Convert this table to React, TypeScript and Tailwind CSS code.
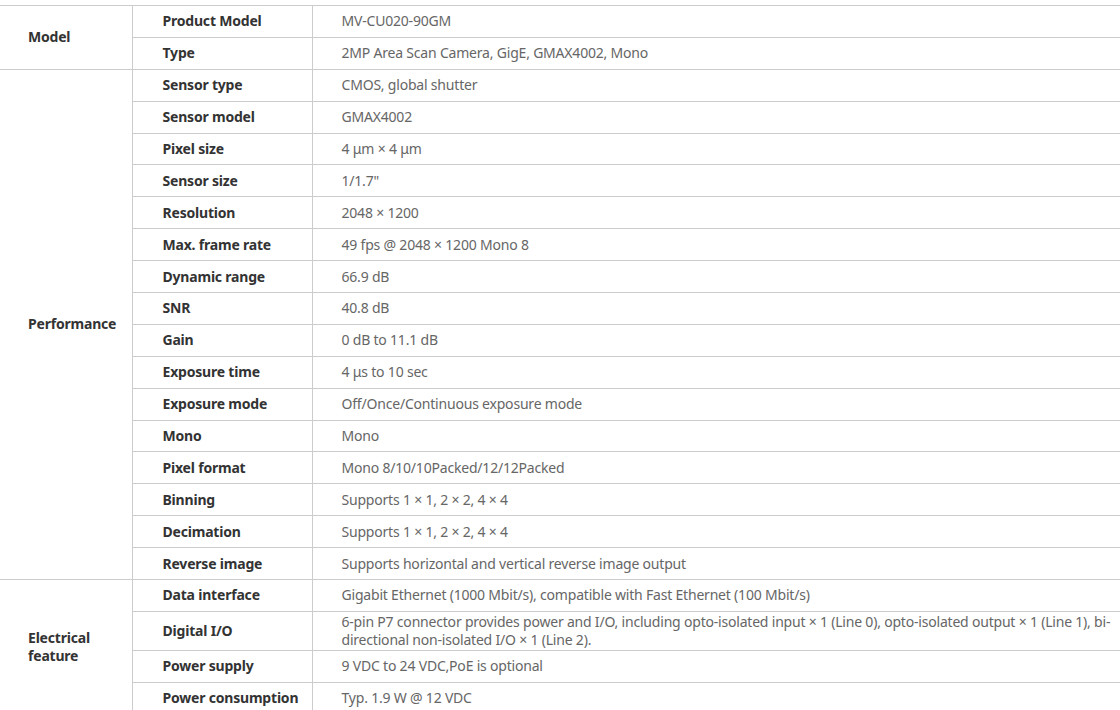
import React from "react";

type Row = [string, string];
type Group = { name: string; rows: Row[] };

const groups: Group[] = [
  {
    name: "Model",
    rows: [
      ["Product Model", "MV-CU020-90GM"],
      ["Type", "2MP Area Scan Camera, GigE, GMAX4002, Mono"],
    ],
  },
  {
    name: "Performance",
    rows: [
      ["Sensor type", "CMOS, global shutter"],
      ["Sensor model", "GMAX4002"],
      ["Pixel size", "4 μm × 4 μm"],
      ["Sensor size", "1/1.7\""],
      ["Resolution", "2048 × 1200"],
      ["Max. frame rate", "49 fps @ 2048 × 1200 Mono 8"],
      ["Dynamic range", "66.9 dB"],
      ["SNR", "40.8 dB"],
      ["Gain", "0 dB to 11.1 dB"],
      ["Exposure time", "4 μs to 10 sec"],
      ["Exposure mode", "Off/Once/Continuous exposure mode"],
      ["Mono", "Mono"],
      ["Pixel format", "Mono 8/10/10Packed/12/12Packed"],
      ["Binning", "Supports 1 × 1, 2 × 2, 4 × 4"],
      ["Decimation", "Supports 1 × 1, 2 × 2, 4 × 4"],
      ["Reverse image", "Supports horizontal and vertical reverse image output"],
    ],
  },
  {
    name: "Electrical feature",
    rows: [
      ["Data interface", "Gigabit Ethernet (1000 Mbit/s), compatible with Fast Ethernet (100 Mbit/s)"],
      [
        "Digital I/O",
        "6-pin P7 connector provides power and I/O, including opto-isolated input × 1 (Line 0), opto-isolated output × 1 (Line 1), bi-directional non-isolated I/O × 1 (Line 2).",
      ],
      ["Power supply", "9 VDC to 24 VDC,PoE is optional"],
      ["Power consumption", "Typ. 1.9 W @ 12 VDC"],
    ],
  },
];

export default function App() {
  return (
    <div
      className="w-[1120px] h-[710px] overflow-hidden bg-white pt-[5px]"
      style={{ fontFamily: '"Noto Sans", "Open Sans", sans-serif' }}
    >
      <table className="w-[1124px] border-collapse table-fixed text-[14px] leading-[18px] tracking-[-0.2px]">
        <colgroup>
          <col className="w-[132px]" />
          <col className="w-[180px]" />
          <col />
        </colgroup>
        <tbody>
          {groups.map((g) =>
            g.rows.map((r, i) => (
              <tr key={g.name + r[0]}>
                {i === 0 && (
                  <td
                    rowSpan={g.rows.length}
                    className="border-t border-b border-r border-[#cccccc] pl-[28px] pr-[10px] align-middle font-bold text-[#333333]"
                  >
                    {g.name}
                  </td>
                )}
                <td className="h-[31.9px] border border-[#cccccc] pl-[30px] pr-[4px] py-[1px] align-middle font-bold text-[#333333]">
                  {r[0]}
                </td>
                <td className="h-[31.9px] border-t border-b border-l border-[#cccccc] pl-[29px] pr-[2px] py-[1px] align-middle text-[#666666]">
                  {r[1]}
                </td>
              </tr>
            ))
          )}
        </tbody>
      </table>
    </div>
  );
}
